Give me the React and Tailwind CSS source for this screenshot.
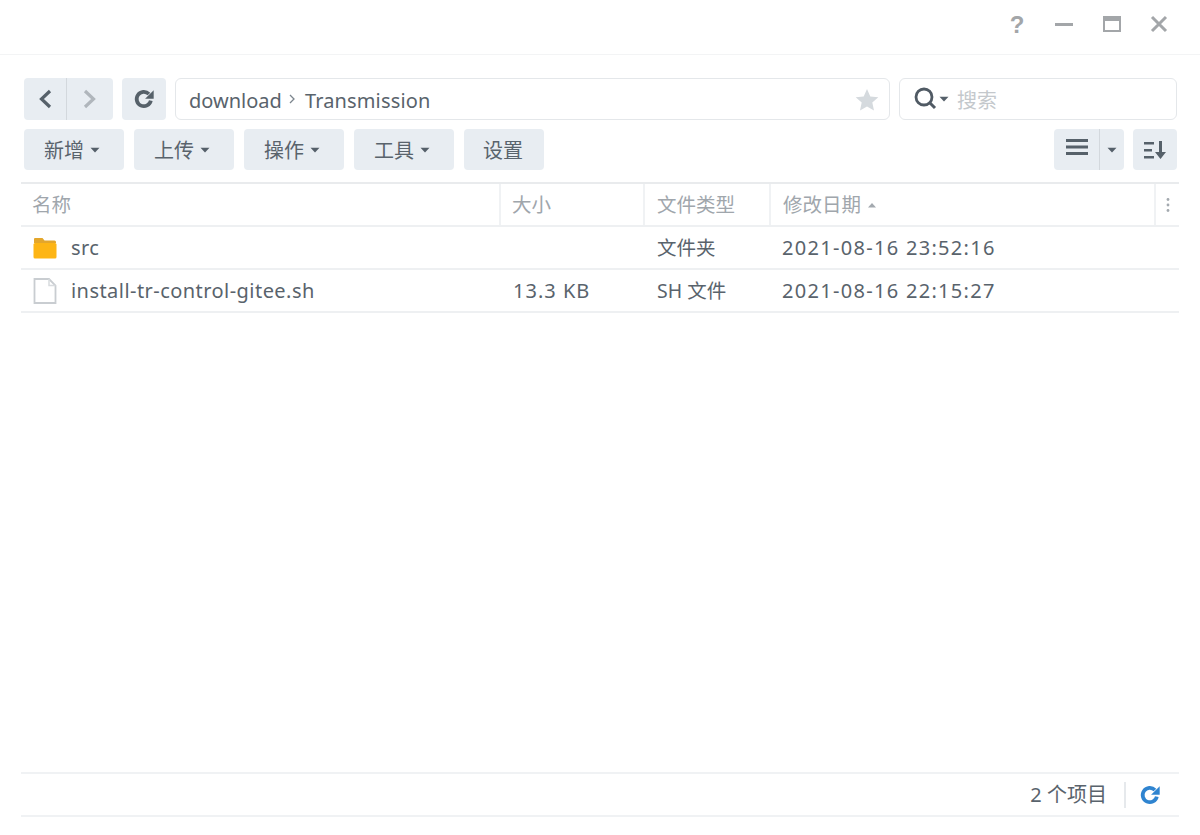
import React from 'react';

const Caret = ({ className = '' }) => (
  <svg width="10" height="6" viewBox="0 0 10 6" className={className}>
    <path d="M0.5 0.8h9L5 5.4z" fill="#55606a" />
  </svg>
);

const RefreshIcon = ({ color = '#56616a', size = 20 }) => (
  <svg width={size} height={size} viewBox="0 0 20 20" fill="none">
    <path d="M16.200 11.400a6.500 6.500 0 1 1-1.700-5.900" stroke={color} strokeWidth="3.400" />
    <path d="M18.800 2v7.800h-7.800z" fill={color} />
  </svg>
);

const ToolButton = ({ label }) => (
  <button className="h-[41px] w-[100px] pr-[4px] rounded bg-[#e8edf2] flex items-center justify-center gap-[6px] text-[20px] text-[#59636c]">
    <span className="mt-[3px]">{label}</span>
    <Caret />
  </button>
);

const HeaderCell = ({ className = '', children }) => (
  <div className={`flex items-center h-full pt-[1px] border-r-2 border-[#f0f2f4] text-[19.500px] text-[#a0a6ac] ${className}`}>
    {children}
  </div>
);

const FolderIcon = () => (
  <svg width="24" height="22" viewBox="0 0 24 22">
    <path d="M2 1h7.500l2 2.500h10a1.500 1.500 0 0 1 1.500 1.500V6H1V2a1 1 0 0 1 1-1z" fill="#e3a62c" />
    <rect x="0.500" y="6" width="23" height="15.500" rx="1.500" fill="#fdb515" />
  </svg>
);

const FileIcon = () => (
  <svg width="24" height="26" viewBox="0 0 24 26" fill="none">
    <path d="M1.500 1h14.500l6.500 6.500v17.500h-21z" fill="#fff" stroke="#c9cdd1" strokeWidth="1.800" />
    <path d="M16 1v6.500h6.500" stroke="#d8dbde" strokeWidth="1.500" />
  </svg>
);

const rows = [
  { icon: <FolderIcon />, name: 'src', size: '', type: '文件夹', date: '2021-08-16 23:52:16' },
  { icon: <FileIcon />, name: 'install-tr-control-gitee.sh', size: '13.3 KB', type: 'SH 文件', date: '2021-08-16 22:15:27' },
];

export default function App() {
  return (
    <div className="w-[1200px] h-[835px] bg-white flex flex-col overflow-hidden font-['Noto_Sans','Noto_Sans_CJK_SC',sans-serif] text-[#59636c]">
      {/* title bar */}
      <div className="h-[55px] shrink-0 border-b border-[#f3f4f5] flex items-center justify-end pr-[30px] pb-[6px]">
        <span className="w-[22px] mt-[2px] text-center text-[24px] leading-none font-semibold text-[#a3a6a9] font-['Liberation_Sans',sans-serif]">?</span>
        <svg width="22" height="22" viewBox="0 0 22 22" className="ml-[25px]"><rect x="2" y="10" width="18" height="3" fill="#a3a6a9" /></svg>
        <svg width="22" height="22" viewBox="0 0 22 22" fill="none" className="ml-[25px]">
          <rect x="3" y="3" width="18" height="16" fill="#a3a6a9" />
          <rect x="5" y="8" width="14" height="9" fill="#fff" />
        </svg>
        <svg width="22" height="22" viewBox="0 0 22 22" className="ml-[26px]"><path d="M4 4l14 14M18 4L4 18" stroke="#a3a6a9" strokeWidth="3" /></svg>
      </div>

      {/* path row */}
      <div className="mt-[23px] ml-[24px] mr-[23px] h-[42px] flex items-stretch">
        <div className="w-[89px] rounded bg-[#e8edf2] flex">
          <div className="w-[43px] border-r border-[#d3d8dd] flex items-center justify-center">
            <svg width="16" height="22" viewBox="0 0 16 22" fill="none"><path d="M13 3l-8.500 8 8.500 8" stroke="#56616a" strokeWidth="3.200" /></svg>
          </div>
          <div className="flex-1 flex items-center justify-center">
            <svg width="16" height="22" viewBox="0 0 16 22" fill="none"><path d="M3 3l8.500 8-8.500 8" stroke="#b0b6bc" strokeWidth="3.200" /></svg>
          </div>
        </div>
        <div className="ml-[9px] w-[44px] rounded bg-[#e8edf2] flex items-center justify-center">
          <RefreshIcon size={22} />
        </div>
        <div className="ml-[9px] w-[715px] rounded-md border border-[#e4e7ea] flex items-center pl-[13px] pr-[10px] text-[20px] text-[#59636c]">
          <span className="mt-[3px]">download</span>
          <svg width="10" height="12" viewBox="0 0 10 12" fill="none" className="ml-[5px] mr-[8px] mb-[1px]"><path d="M3 2l4 4-4 4" stroke="#7c858d" strokeWidth="1.300" /></svg>
          <span className="mt-[3px] tracking-[0.15px]">Transmission</span>
          <svg width="24" height="24" viewBox="0 0 24 24" className="ml-auto mt-[1px]"><path d="M12 1l3.300 7.400 8 .8-6 5.400 1.700 7.900-7-4-7 4 1.700-7.900-6-5.400 8-.8z" fill="#d5dade" /></svg>
        </div>
        <div className="ml-[9px] flex-1 rounded-md border border-[#e4e7ea] flex items-center pl-[14px]">
          <svg width="24" height="24" viewBox="0 0 24 24" fill="none">
            <circle cx="10" cy="10" r="8" stroke="#505a64" strokeWidth="2.800" />
            <path d="M15.500 15.500l5.500 5.500" stroke="#505a64" strokeWidth="3" />
          </svg>
          <Caret className="ml-[1px]" />
          <span className="ml-[8px] mt-[3px] text-[20px] text-[#c4c8cc]">搜索</span>
        </div>
      </div>

      {/* action row */}
      <div className="mt-[9px] ml-[24px] mr-[23px] h-[41px] flex gap-[10px]">
        <ToolButton label="新增" />
        <ToolButton label="上传" />
        <ToolButton label="操作" />
        <ToolButton label="工具" />
        <button className="h-[41px] w-[80px] pt-[3px] pr-[2px] rounded bg-[#e8edf2] text-[20px] text-[#59636c]">设置</button>
        <div className="ml-auto w-[70px] rounded bg-[#e8edf2] flex">
          <div className="w-[46px] pb-[6px] border-r border-[#d3d8dd] flex items-center justify-center">
            <svg width="22" height="18" viewBox="0 0 22 18"><path d="M0 1h22v3H0zM0 7.500h22v3H0zM0 14h22v3H0z" fill="#56616a" /></svg>
          </div>
          <div className="flex-1 flex items-center justify-center"><Caret /></div>
        </div>
        <div className="w-[44px] -ml-[1px] rounded bg-[#e8edf2] flex items-center justify-center">
          <svg width="24" height="22" viewBox="0 0 24 22">
            <path d="M1 3h10v2.500H1zM1 10h8v2.500H1zM1 17h10v2.500H1z" fill="#56616a" />
            <path d="M16 2h3v11h4l-5.500 7-5.500-7h4z" fill="#56616a" />
          </svg>
        </div>
      </div>

      {/* table */}
      <div className="mt-[12px] mx-[21px] border-t-2 border-[#e9ebed]">
        <div className="h-[43px] flex border-b-2 border-[#eef0f2]">
          <HeaderCell className="w-[480px] pl-[11px]">名称</HeaderCell>
          <HeaderCell className="w-[144px] pl-[11px]">大小</HeaderCell>
          <HeaderCell className="w-[126px] pl-[12px]">文件类型</HeaderCell>
          <HeaderCell className="w-[385px] pl-[12px]">
            修改日期
            <svg width="10" height="6" viewBox="0 0 10 6" className="ml-[6px] mb-[1px]"><path d="M1 5.500h8L5 1z" fill="#a3a9af" /></svg>
          </HeaderCell>
          <div className="flex-1 flex items-center justify-center">
            <svg width="4" height="16" viewBox="0 0 4 16"><circle cx="2" cy="2.500" r="1.400" fill="#a3a9af" /><circle cx="2" cy="8" r="1.400" fill="#a3a9af" /><circle cx="2" cy="13.500" r="1.400" fill="#a3a9af" /></svg>
          </div>
        </div>
        {rows.map((row) => (
          <div key={row.name} className="h-[43px] flex items-center border-b-2 border-[#eef0f2] text-[20px] text-[#59636c]">
            <div className="w-[480px] pl-[11px] flex items-center">
              <span className="w-[25px] flex justify-center">{row.icon}</span>
              <span className="ml-[14px] tracking-[0.450px]">{row.name}</span>
            </div>
            <div className="w-[144px] pl-[12px] tracking-[1px]">{row.size}</div>
            <div className="w-[126px] pl-[12px] text-[19.500px]">{row.type}</div>
            <div className="pl-[11px] tracking-[1.300px]">{row.date}</div>
          </div>
        ))}
      </div>

      {/* footer */}
      <div className="mt-auto mb-[18px] mx-[21px] h-[45px] border-y-2 border-[#f0f2f4] flex items-center justify-end">
        <span className="text-[20px] text-[#59636c]">2 个项目</span>
        <div className="ml-[17px] h-[26px] border-l-2 border-[#e6e9ec]" />
        <div className="ml-[13px] mr-[18px] flex">
          <RefreshIcon color="#2f84d0" size={22} />
        </div>
      </div>
    </div>
  );
}
